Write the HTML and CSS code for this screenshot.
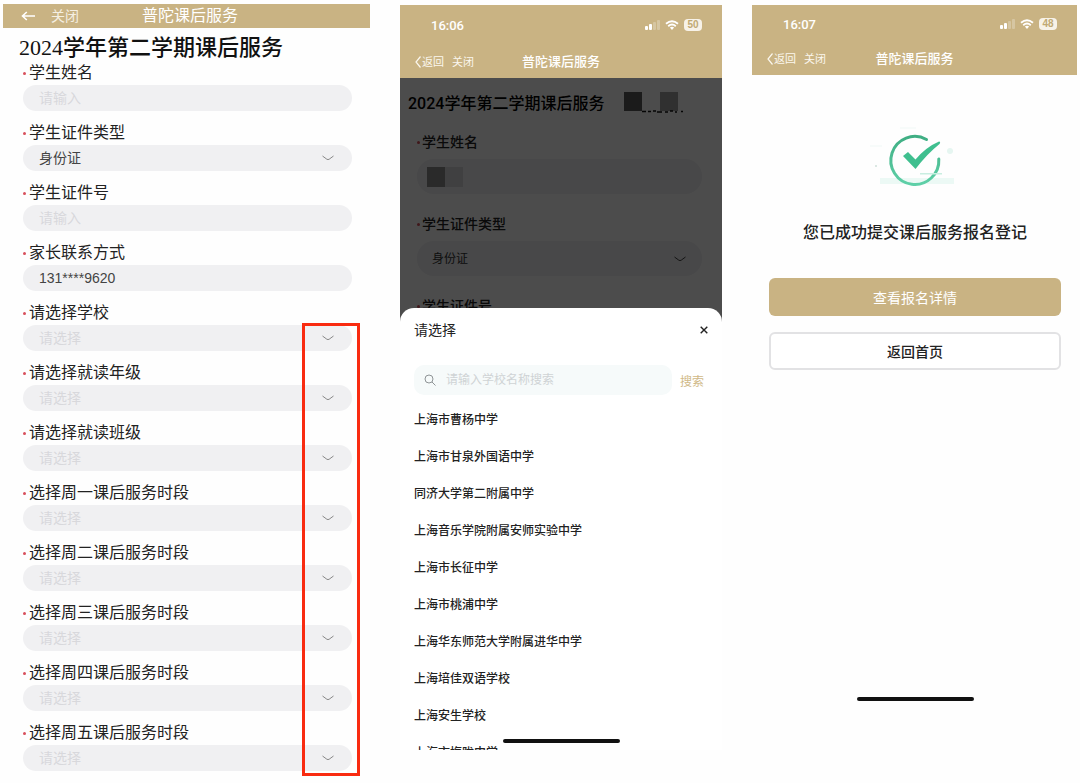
FILE: index.html
```html
<!DOCTYPE html>
<html lang="zh-CN">
<head>
<meta charset="utf-8">
<meta name="viewport" content="width=device-width, initial-scale=1">
<title>普陀课后服务</title>
<link rel="stylesheet" href="styles.css">
</head>
<body>
<svg class="defs" aria-hidden="true">
  <symbol id="chevron" viewBox="0 0 12 6"><path d="M.5 1 L4.8 4.2 Q6 5 7.2 4.2 L11.5 1" fill="none" stroke="currentColor" stroke-width="1"/></symbol>
  <symbol id="signal" viewBox="0 0 15 10"><rect x="0" y="6" width="3" height="4" rx="1" fill="#fff"/><rect x="4" y="4" width="3" height="6" rx="1" fill="#fff"/><rect x="8" y="2" width="3" height="8" rx="1" fill="#fff" opacity=".25"/><rect x="12" y="0" width="3" height="10" rx="1" fill="#fff" opacity=".25"/></symbol>
  <symbol id="wifi" viewBox="0 0 14 10"><path d="M1 3.8 Q7 -1.4 13 3.8 M3.2 6.2 Q7 2.9 10.8 6.2" fill="none" stroke="#fff" stroke-width="1.8"/><path d="M4.9 7.6 Q7 6 9.1 7.6 L7 10Z" fill="#fff"/></symbol>
</svg>
<main class="board">

  <section class="screen">
    <header class="bar bar-slim">
      <button class="bar-btn" type="button" aria-label="返回"><svg class="arrow" viewBox="0 0 14 10"><path d="M14 5H1.5M5.8 1L1.5 5l4.3 4" fill="none" stroke="currentColor" stroke-width="1.6"/></svg></button>
      <button class="bar-btn bar-close" type="button">关闭</button>
      <h1 class="bar-title">普陀课后服务</h1>
    </header>
    <form class="form">
      <h2 class="form-title">2024学年第二学期课后服务</h2>
      <div class="field"><label for="name">学生姓名</label><input id="name" class="pill" type="text" placeholder="请输入"></div>
      <div class="field"><label for="idtype">学生证件类型</label><div class="pick"><select id="idtype" class="pill"><option>身份证</option></select><svg class="chev"><use href="#chevron"/></svg></div></div>
      <div class="field"><label for="idno">学生证件号</label><input id="idno" class="pill" type="text" placeholder="请输入"></div>
      <div class="field"><label for="tel">家长联系方式</label><input id="tel" class="pill" type="text" value="131****9620"></div>
      <div class="marked">
        <div class="field"><label for="school">请选择学校</label><div class="pick"><select id="school" class="pill empty"><option>请选择</option></select><svg class="chev"><use href="#chevron"/></svg></div></div>
        <div class="field"><label for="grade">请选择就读年级</label><div class="pick"><select id="grade" class="pill empty"><option>请选择</option></select><svg class="chev"><use href="#chevron"/></svg></div></div>
        <div class="field"><label for="class">请选择就读班级</label><div class="pick"><select id="class" class="pill empty"><option>请选择</option></select><svg class="chev"><use href="#chevron"/></svg></div></div>
        <div class="field"><label for="mon">选择周一课后服务时段</label><div class="pick"><select id="mon" class="pill empty"><option>请选择</option></select><svg class="chev"><use href="#chevron"/></svg></div></div>
        <div class="field"><label for="tue">选择周二课后服务时段</label><div class="pick"><select id="tue" class="pill empty"><option>请选择</option></select><svg class="chev"><use href="#chevron"/></svg></div></div>
        <div class="field"><label for="wed">选择周三课后服务时段</label><div class="pick"><select id="wed" class="pill empty"><option>请选择</option></select><svg class="chev"><use href="#chevron"/></svg></div></div>
        <div class="field"><label for="thu">选择周四课后服务时段</label><div class="pick"><select id="thu" class="pill empty"><option>请选择</option></select><svg class="chev"><use href="#chevron"/></svg></div></div>
        <div class="field"><label for="fri">选择周五课后服务时段</label><div class="pick"><select id="fri" class="pill empty"><option>请选择</option></select><svg class="chev"><use href="#chevron"/></svg></div></div>
        <div class="marker"></div>
      </div>
    </form>
  </section>

  <section class="screen phone">
    <header class="top">
      <div class="status"><span class="time">16:06</span><svg class="signal"><use href="#signal"/></svg><svg class="wifi"><use href="#wifi"/></svg><span class="battery">50</span></div>
      <div class="nav"><button class="nav-btn" type="button"><svg class="back" viewBox="0 0 6 12"><path d="M5.500 .5L1 6l4.500 5.500" fill="none" stroke="currentColor" stroke-width="1.2"/></svg>返回</button><button class="nav-btn" type="button">关闭</button><h2 class="nav-title">普陀课后服务</h2></div>
    </header>
    <div class="under">
      <div class="under-head"><h3 class="under-title">2024学年第二学期课后服务</h3>
        <svg class="mosaic" viewBox="0 0 60 21"><path fill="#5a5a5a" d="M0 0h18v19H0z"/><path fill="#a0a0a0" d="M36 0h18v19H36z"/><path stroke="#111" stroke-width="1.5" d="M18 19.5h4M24 19.5h3M29 19h3M33 20h5M41 20h3M46 19h3M51 20h2M57 19.500h2"/></svg>
      </div>
      <div class="ufield"><label for="uname">学生姓名</label><div class="pick"><input id="uname" class="upill" type="text"><svg class="mask" viewBox="0 0 36 20"><path fill="#8c8c8c" d="M0 0h18v20H0z"/><path fill="#d6d6da" d="M18 0h18v20H18z"/></svg></div></div>
      <div class="ufield"><label for="utype">学生证件类型</label><div class="pick"><select id="utype" class="upill"><option>身份证</option></select><svg class="chev"><use href="#chevron"/></svg></div></div>
      <div class="ufield"><label for="uno">学生证件号</label><input id="uno" class="upill" type="text"></div>
      <div class="shade"></div>
    </div>
    <div class="sheet">
      <div class="sheet-head"><h3>请选择</h3><button class="close" type="button" aria-label="关闭"><svg viewBox="0 0 8 8"><path d="M.7 .7l6.6 6.6M7.300 .7L.7 7.300" stroke="currentColor" stroke-width="1.4"/></svg></button></div>
      <div class="search">
        <div class="search-box"><svg class="glass" viewBox="0 0 12 12"><circle cx="5" cy="5" r="4" fill="none" stroke="currentColor"/><path d="M8 8l3.500 3.500" stroke="currentColor"/></svg><input type="text" aria-label="学校名称" placeholder="请输入学校名称搜索"></div>
        <button class="search-btn" type="button">搜索</button>
      </div>
      <ul class="schools">
        <li><button type="button">上海市曹杨中学</button></li>
        <li><button type="button">上海市甘泉外国语中学</button></li>
        <li><button type="button">同济大学第二附属中学</button></li>
        <li><button type="button">上海音乐学院附属安师实验中学</button></li>
        <li><button type="button">上海市长征中学</button></li>
        <li><button type="button">上海市桃浦中学</button></li>
        <li><button type="button">上海华东师范大学附属进华中学</button></li>
        <li><button type="button">上海培佳双语学校</button></li>
        <li><button type="button">上海安生学校</button></li>
        <li><button type="button">上海市梅陇中学</button></li>
      </ul>
      <div class="home home-over"></div>
    </div>
  </section>

  <section class="screen phone">
    <header class="top top-short">
      <div class="status"><span class="time">16:07</span><svg class="signal"><use href="#signal"/></svg><svg class="wifi"><use href="#wifi"/></svg><span class="battery">48</span></div>
      <div class="nav"><button class="nav-btn" type="button"><svg class="back" viewBox="0 0 6 12"><path d="M5.500 .5L1 6l4.500 5.500" fill="none" stroke="currentColor" stroke-width="1.2"/></svg>返回</button><button class="nav-btn" type="button">关闭</button><h2 class="nav-title">普陀课后服务</h2></div>
    </header>
    <div class="result">
      <svg class="done" viewBox="0 0 90 64">
        <defs><linearGradient id="g" x1="0" y1="0" x2="0" y2="1"><stop offset="0" stop-color="#3fae83"/><stop offset="1" stop-color="#5fd0a8"/></linearGradient></defs>
        <path d="M10 51h74v6H10z" fill="#ecf9f5"/>
        <path d="M0 18h12v2H0zM30 0h16v2H30z" fill="#f7fbfa"/>
        <circle cx="80" cy="24" r="3" fill="#e6f6f1"/><circle cx="6" cy="39" r="1" fill="#cfe0da"/>
        <path d="M56.500 12.500 A24 24 0 1 0 68.800 32" fill="none" stroke="url(#g)" stroke-width="3" stroke-linecap="round"/>
        <path d="M33 29L38 25L45.500 32.500Q56 20 69 14.500Q71 15 69.500 17Q57 27 45.500 42Z" fill="#3fbf8f"/>
        <path d="M50 46h22v1.500H50z" fill="#c9eee1"/>
      </svg>
      <p class="message">您已成功提交课后服务报名登记</p>
      <div class="actions"><button class="btn btn-gold" type="button">查看报名详情</button><button class="btn btn-line" type="button">返回首页</button></div>
      <div class="home"></div>
    </div>
  </section>
</main>
</body>
</html>
```

FILE: styles.css
```css
* { box-sizing: border-box; }
body {
  margin: 0;
  background: #fefefe;
  color: #222;
  font-family: "Liberation Sans", "Noto Sans CJK SC", sans-serif;
}
h1, h2, h3, p, ul { margin: 0; padding: 0; }
ul { list-style: none; }
button, input, select {
  margin: 0;
  padding: 0;
  border: 0;
  background: none;
  color: inherit;
  font: inherit;
}
select { appearance: none; }
svg { display: block; flex: none; }
.defs { position: absolute; width: 0; height: 0; }

.board {
  display: grid;
  grid-template-columns: 367fr 322fr 325fr;
  gap: 30px;
  align-items: start;
  padding: 4px 3px 0;
}
.screen { min-width: 0; }

/* Registration form */
.bar {
  display: flex;
  align-items: center;
  height: 24px;
  padding-left: 18px;
  background: #c9b383;
  color: #fff;
}
.arrow { width: 14px; height: 10px; }
.bar-close { margin-left: 16px; font-size: 14px; line-height: 20px; color: #f5efe2; }
.bar-title { margin-left: 63px; font-size: 16px; font-weight: 400; line-height: 20px; }
.form { padding-top: 8px; }
.form-title {
  padding-left: 16px;
  font-family: "Liberation Serif", "Noto Sans CJK SC", serif;
  font-size: 22px;
  font-weight: 500;
  line-height: 24px;
  color: #111;
}
.field { height: 60px; padding: 3px 18px 0 20px; }
.field label, .ufield label { display: block; position: relative; }
.field label { padding-left: 6px; font-size: 16px; line-height: 20px; }
.field label::before, .ufield label::before {
  content: "";
  position: absolute;
  left: 0;
  top: 9px;
  width: 3px;
  height: 3px;
  border-radius: 50%;
  background: #d8505c;
}
.pill {
  display: block;
  width: 100%;
  height: 26px;
  margin-top: 2px;
  padding: 0 16px;
  border-radius: 13px;
  background: #f0f0f2;
  font-size: 14px;
  color: #444;
}
.pill.empty { color: #d8d8dc; }
.pill::placeholder { color: #d8d8dc; opacity: 1; }
.pick { position: relative; }
.chev {
  position: absolute;
  right: 18px;
  top: 50%;
  width: 12px;
  height: 6px;
  margin-top: -3px;
  color: #888;
  pointer-events: none;
}
.marked { position: relative; }
.marker {
  position: absolute;
  top: 23px;
  bottom: 4px;
  right: 10px;
  width: 58px;
  border: 3px solid #f92b10;
  pointer-events: none;
}

/* Phone header */
.phone { padding-top: 1px; }
.top { height: 73px; padding-top: 10px; background: #c9b383; color: #fff; }
.top-short { height: 70px; padding-top: 9px; }
.status { display: flex; align-items: center; height: 20px; padding: 0 20px 0 31px; }
.time {
  margin-right: auto;
  font-family: Roboto, sans-serif;
  font-size: 13px;
  font-weight: 500;
}
.signal { width: 15px; height: 10px; }
.wifi { width: 14px; height: 10px; margin: 0 5px; }
.battery {
  width: 18px;
  height: 12px;
  border-radius: 4px;
  background: #f7f2e8;
  color: #c0a973;
  font-size: 10px;
  font-weight: 700;
  line-height: 12px;
  text-align: center;
}
.nav {
  display: flex;
  align-items: center;
  position: relative;
  height: 20px;
  margin-top: 17px;
  padding-left: 15px;
  gap: 8px;
}
.top-short .nav { margin-top: 15px; }
.nav-btn { display: flex; align-items: center; gap: 1px; font-size: 11px; line-height: 20px; color: #fbf7ee; }
.back { width: 6px; height: 12px; }
.nav-title {
  position: absolute;
  inset: 0;
  font-size: 13px;
  font-weight: 500;
  line-height: 20px;
  text-align: center;
  pointer-events: none;
}

/* Dimmed form under the sheet */
.under { position: relative; height: 245px; overflow: hidden; background: #fff; }
.under-head { display: flex; align-items: start; padding: 14px 0 0 8px; }
.under-title {
  font-family: Roboto, "Noto Sans CJK SC", sans-serif;
  font-size: 16px;
  font-weight: 500;
  line-height: 24px;
  white-space: nowrap;
  color: #000;
}
.mosaic { width: 60px; height: 21px; margin-left: 20px; }
.ufield { height: 82px; padding: 16px 20px 0 17px; }
.ufield label { padding-left: 5px; font-size: 14px; font-weight: 500; line-height: 20px; }
.upill {
  display: block;
  width: 100%;
  height: 35px;
  margin-top: 7px;
  padding: 0 15px;
  border-radius: 17px;
  background: #f0f0f3;
  font-size: 12px;
  color: #333;
}
.under .chev { right: 16px; color: #444; }
.mask { position: absolute; left: 10px; top: 8px; width: 36px; height: 20px; }
.shade { position: absolute; inset: 0; background: rgba(0, 0, 0, .7); }

/* School picker */
.sheet {
  position: relative;
  margin-top: -15px;
  padding: 12px 18px 0 14px;
  border-radius: 14px 14px 0 0;
  background: #fff;
}
.sheet-head { display: flex; align-items: center; justify-content: space-between; margin-right: -4px; }
.sheet-head h3 { font-size: 14px; font-weight: 400; line-height: 20px; }
.close svg { width: 8px; height: 8px; }
.close { padding: 6px 0; color: #222; }
.search { display: flex; align-items: center; gap: 8px; margin-top: 25px; }
.search-box {
  display: flex;
  flex: 1;
  align-items: center;
  gap: 10px;
  min-width: 0;
  height: 30px;
  padding: 0 10px;
  border-radius: 10px;
  background: #f6fafa;
  font-size: 12px;
}
.search-box input { flex: 1; min-width: 0; }
.search-box input::placeholder { color: #cfd3d5; opacity: 1; }
.glass { width: 12px; height: 12px; color: #8f9496; }
.search-btn { font-size: 12px; color: #d0b987; }
.schools { height: 350px; margin-top: 5px; overflow: hidden; }
.schools button {
  display: block;
  width: 100%;
  height: 37px;
  font-size: 12px;
  font-weight: 500;
  text-align: left;
}
.home { width: 117px; height: 4px; margin: 0 auto; border-radius: 2px; background: #111; }
.home-over { position: absolute; left: 0; right: 0; bottom: 7px; }

/* Confirmation */
.result { padding: 52px 16px 0 17px; text-align: center; }
.done { width: 90px; height: 64px; margin: 0 auto; }
.message { margin-top: 30px; font-size: 16px; font-weight: 500; line-height: 24px; }
.actions { display: grid; gap: 16px; margin: 33px 0 327px; }
.btn { height: 38px; border-radius: 6px; font-size: 14px; }
.btn-gold { background: #c9b383; color: #fff; }
.btn-line { border: 2px solid #e2e2e4; background: #fff; font-weight: 500; }
```
